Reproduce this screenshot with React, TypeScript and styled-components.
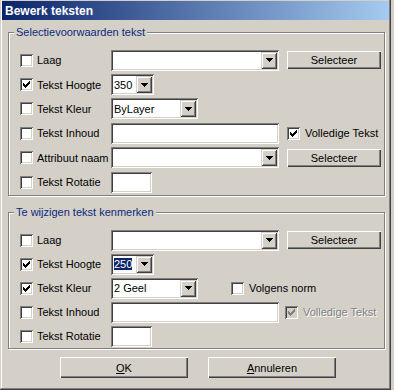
import React from 'react';
import styled, { createGlobalStyle, css } from 'styled-components';

const FACE = '#d4d0c8';
const SHADOW = '#808080';
const DARK = '#404040';
const HILITE = '#ffffff';

const GlobalStyle = createGlobalStyle`
  html, body {
    margin: 0;
    padding: 0;
    background: ${FACE};
  }
  body {
    font-family: "Liberation Sans", Arial, sans-serif;
    font-size: 11px;
    color: #000;
  }
`;

const sunken = css`
  box-shadow:
    inset 1px 1px 0 ${SHADOW},
    inset -1px -1px 0 ${HILITE},
    inset 2px 2px 0 ${DARK},
    inset -2px -2px 0 ${FACE};
`;

const raised = css`
  box-shadow:
    inset 1px 1px 0 ${FACE},
    inset -1px -1px 0 ${DARK},
    inset 2px 2px 0 ${HILITE},
    inset -2px -2px 0 ${SHADOW};
`;

const Window = styled.div`
  box-sizing: border-box;
  width: 391px;
  height: 390px;
  padding: 1px 2px 0 2px;
  background: ${FACE};
  box-shadow:
    inset -1px -1px 0 ${DARK},
    inset 1px 0 0 ${FACE},
    inset -2px -2px 0 ${SHADOW},
    inset 2px 0 0 ${HILITE};
`;

const TitleBar = styled.div`
  height: 19px;
  display: flex;
  align-items: center;
  padding-left: 3px;
  background: linear-gradient(to right, #0a246a, #a6caf0);
  color: #fff;
  font-weight: bold;
  font-size: 12px;
`;

const Body = styled.div`
  padding: 6px 4px 0 6px;
`;

const Group = styled.fieldset<{ $gapTop?: number }>`
  box-sizing: border-box;
  width: 377px;
  margin: ${({ $gapTop }) => $gapTop ?? 0}px 0 0 0;
  padding: 0;
  min-inline-size: 0;
  border: 1px solid ${SHADOW};
  box-shadow: inset 1px 1px 0 ${HILITE}, 1px 1px 0 ${HILITE};
`;

const Legend = styled.legend`
  margin-left: 5px;
  padding: 0 2px;
  line-height: 13px;
  color: #0a2a7c;
  background: ${FACE};
`;

const Rows = styled.div<{ $rowH: number; $bottom: number }>`
  display: grid;
  grid-auto-rows: ${({ $rowH }) => $rowH}px;
  padding: 9px 4px ${({ $bottom }) => $bottom}px 11px;
`;

const Row = styled.div`
  display: grid;
  grid-template-columns: 17px 74px 176px 93px;
  align-items: center;
`;

const BoxFrame = styled.span<{ $disabled?: boolean }>`
  box-sizing: border-box;
  display: inline-flex;
  align-items: center;
  justify-content: center;
  width: 13px;
  height: 13px;
  background: ${({ $disabled }) => ($disabled ? FACE : '#fff')};
  ${sunken};
`;

const Label = styled.span<{ $disabled?: boolean }>`
  white-space: nowrap;
  color: ${({ $disabled }) => ($disabled ? SHADOW : '#000')};
  text-shadow: ${({ $disabled }) => ($disabled ? `1px 1px 0 ${HILITE}` : 'none')};
`;

const CheckItem = styled.span<{ $offset?: number }>`
  display: inline-flex;
  align-items: center;
  gap: 5px;
  margin-left: ${({ $offset }) => $offset ?? 0}px;
`;

const Field = styled.div<{ $w: number }>`
  box-sizing: border-box;
  width: ${({ $w }) => $w}px;
  height: 21px;
  display: flex;
  align-items: center;
  padding: 2px;
  background: #fff;
  ${sunken};
`;

const FieldText = styled.span`
  flex: 1;
  padding-left: 1px;
  overflow: hidden;
  white-space: nowrap;
  line-height: 14px;
`;

const Selected = styled.span`
  background: #0a246a;
  color: #fff;
`;

const DropButton = styled.span`
  box-sizing: border-box;
  width: 16px;
  height: 17px;
  display: flex;
  align-items: center;
  justify-content: center;
  background: ${FACE};
  ${raised};
`;

const PushButton = styled.button<{ $w: number; $h: number }>`
  box-sizing: border-box;
  width: ${({ $w }) => $w}px;
  height: ${({ $h }) => $h}px;
  padding: 0;
  border: none;
  background: ${FACE};
  font-family: inherit;
  font-size: 11px;
  color: #000;
  box-shadow:
    inset 1px 1px 0 ${HILITE},
    inset -1px -1px 0 ${DARK},
    inset -2px -2px 0 ${SHADOW};
`;

const Inline = styled.div`
  grid-column: 3 / 5;
  display: flex;
  align-items: center;
`;

const Footer = styled.div`
  display: flex;
  justify-content: center;
  gap: 20px;
  margin-top: 8px;
  padding-left: 3px;
`;

function CheckMark({ color }: { color: string }) {
  const tops = [2, 3, 4, 3, 2, 1, 0];
  return (
    <svg width="7" height="7" viewBox="0 0 7 7" shapeRendering="crispEdges">
      {tops.map((t, x) => (
        <rect key={x} x={x} y={t} width="1" height="3" fill={color} />
      ))}
    </svg>
  );
}

function Arrow() {
  return (
    <svg width="7" height="4" viewBox="0 0 7 4" shapeRendering="crispEdges">
      {[0, 1, 2, 3].map((r) => (
        <rect key={r} x={r} y={r} width={7 - r * 2} height="1" fill="#000" />
      ))}
    </svg>
  );
}

function Check({ checked, disabled }: { checked?: boolean; disabled?: boolean }) {
  return (
    <BoxFrame $disabled={disabled}>
      {checked && <CheckMark color={disabled ? SHADOW : '#000'} />}
    </BoxFrame>
  );
}

function Combo({ w, children }: { w: number; children?: React.ReactNode }) {
  return (
    <Field $w={w}>
      <FieldText>{children}</FieldText>
      <DropButton>
        <Arrow />
      </DropButton>
    </Field>
  );
}

function Edit({ w }: { w: number }) {
  return <Field $w={w} />;
}

function Option({ label, checked, disabled, offset }: { label: string; checked?: boolean; disabled?: boolean; offset?: number }) {
  return (
    <CheckItem $offset={offset}>
      <Check checked={checked} disabled={disabled} />
      <Label $disabled={disabled}>{label}</Label>
    </CheckItem>
  );
}

function RowStart({ label, checked }: { label: string; checked?: boolean }) {
  return (
    <>
      <Check checked={checked} />
      <Label>{label}</Label>
    </>
  );
}

const Selecteer = () => <PushButton $w={94} $h={18}>Selecteer</PushButton>;

export default function App() {
  return (
    <>
      <GlobalStyle />
      <Window>
        <TitleBar>Bewerk teksten</TitleBar>
        <Body>
          <Group>
            <Legend>Selectievoorwaarden tekst</Legend>
            <Rows $rowH={24.4} $bottom={1}>
              <Row>
                <RowStart label="Laag" />
                <Combo w={168} />
                <Selecteer />
              </Row>
              <Row>
                <RowStart label="Tekst Hoogte" checked />
                <Combo w={43}>350</Combo>
              </Row>
              <Row>
                <RowStart label="Tekst Kleur" />
                <Combo w={87}>ByLayer</Combo>
              </Row>
              <Row>
                <RowStart label="Tekst Inhoud" />
                <Edit w={168} />
                <Option label="Volledige Tekst" checked />
              </Row>
              <Row>
                <RowStart label="Attribuut naam" />
                <Combo w={168} />
                <Selecteer />
              </Row>
              <Row>
                <RowStart label="Tekst Rotatie" />
                <Edit w={41} />
              </Row>
            </Rows>
          </Group>

          <Group $gapTop={10}>
            <Legend>Te wijzigen tekst kenmerken</Legend>
            <Rows $rowH={24} $bottom={0}>
              <Row>
                <RowStart label="Laag" />
                <Combo w={168} />
                <Selecteer />
              </Row>
              <Row>
                <RowStart label="Tekst Hoogte" checked />
                <Combo w={43}>
                  <Selected>250</Selected>
                </Combo>
              </Row>
              <Row>
                <RowStart label="Tekst Kleur" checked />
                <Inline>
                  <Combo w={87}>2 Geel</Combo>
                  <Option label="Volgens norm" offset={33} />
                </Inline>
              </Row>
              <Row>
                <RowStart label="Tekst Inhoud" />
                <Edit w={168} />
                <Option label="Volledige Tekst" checked disabled offset={-2} />
              </Row>
              <Row>
                <RowStart label="Tekst Rotatie" />
                <Edit w={41} />
              </Row>
            </Rows>
          </Group>

          <Footer>
            <PushButton $w={128} $h={21}>
              <u>O</u>K
            </PushButton>
            <PushButton $w={128} $h={21}>
              <u>A</u>nnuleren
            </PushButton>
          </Footer>
        </Body>
      </Window>
    </>
  );
}
